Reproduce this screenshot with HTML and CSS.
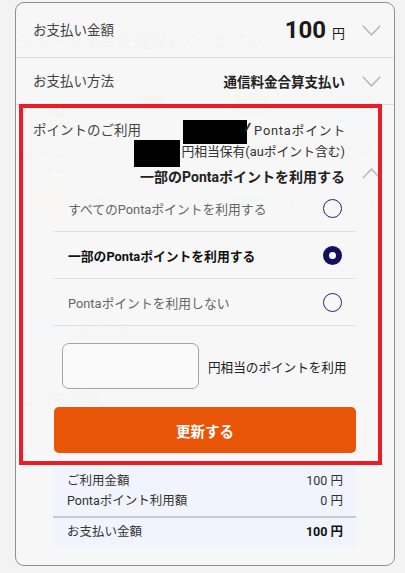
FILE: index.html
```html
<!DOCTYPE html>
<html lang="ja">
<head>
<meta charset="utf-8">
<title>お支払い</title>
<link rel="stylesheet" href="styles.css">
</head>
<body>
<div class="ghost">
  <div class="g-title">チャージ手段を選択してください</div>
  <div class="g-tiles">
    <div class="g-tile"><div class="g-ic g-au">au</div><div class="g-lbl">auかんたん<br>決済</div></div>
    <div class="g-tile"><div class="g-ic g-pay"></div><div class="g-lbl">Pay</div></div>
    <div class="g-tile"><div class="g-ic g-card"></div><div class="g-lbl">クレジット</div></div>
    <div class="g-tile"><div class="g-ic g-bank"></div><div class="g-lbl">銀行口座</div></div>
  </div>
  <div class="g-list">
    <div class="g-item"><span class="g-yen">¥</span><span>払戻金</span></div>
    <div class="g-item"><span class="g-cc"></span><span>クレジットカード</span></div>
  </div>
  <div class="g-list g-list2">
    <div class="g-item"><span class="g-bk"></span><span>銀行口座</span></div>
  </div>
  <div class="g-sub">スマホ決済</div>
</div>

<div class="modal">
  <div class="row row-amount">
    <span class="label">お支払い金額</span>
    <span class="amount"><b>100</b><small>円</small></span>
    <span class="chev"><svg width="19" height="11" viewBox="0 0 19 11"><polyline points="0.8,0.8 9.5,9.8 18.2,0.8" fill="none" stroke="#b9b9b9" stroke-width="1.5"/></svg></span>
  </div>
  <div class="row row-method">
    <span class="label">お支払い方法</span>
    <span class="value">通信料金合算支払い</span>
    <span class="chev"><svg width="19" height="11" viewBox="0 0 19 11"><polyline points="0.8,0.8 9.5,9.8 18.2,0.8" fill="none" stroke="#b9b9b9" stroke-width="1.5"/></svg></span>
  </div>
  <div class="points">
    <div class="points-top">
      <span class="label">ポイントのご利用</span>
      <div class="balance">
        <div class="bal-line"><span class="redact r1"></span><span class="tick"></span><span class="pt">Pontaポイント</span></div>
        <div class="bal-line"><span class="redact r2"></span>円相当保有(auポイント含む)</div>
      </div>
    </div>
    <div class="points-mode">
      <span>一部のPontaポイントを利用する</span>
      <span class="chev"><svg width="19" height="11" viewBox="0 0 19 11"><polyline points="0.8,10.2 9.5,1.2 18.2,10.2" fill="none" stroke="#b9b9b9" stroke-width="1.5"/></svg></span>
    </div>
    <div class="options">
      <div class="opt"><span>すべてのPontaポイントを利用する</span><span class="radio"></span></div>
      <div class="opt on"><span>一部のPontaポイントを利用する</span><span class="radio"></span></div>
      <div class="opt"><span>Pontaポイントを利用しない</span><span class="radio"></span></div>
    </div>
    <div class="custom">
      <div class="input"></div>
      <span>円相当のポイントを利用</span>
    </div>
    <button class="update">更新する</button>
  </div>
  <div class="summary">
    <div class="sum-row"><span>ご利用金額</span><span>100 円</span></div>
    <div class="sum-row"><span>Pontaポイント利用額</span><span>0 円</span></div>
    <div class="sum-sep"></div>
    <div class="sum-row total"><span>お支払い金額</span><b>100 円</b></div>
  </div>
</div>
<div class="annot"></div>
</body>
</html>
```
FILE: styles.css
```css
html, body {
  margin: 0;
  padding: 0;
}
body {
  width: 405px;
  height: 573px;
  overflow: hidden;
  position: relative;
  background: #f3f3f3;
  font-family: Roboto, "Noto Sans CJK JP", sans-serif;
}

/* faint page behind the dialog */
.ghost {
  color: #ebebeb;
}
.g-title {
  padding: 33px 0 0 18px;
  font-size: 16.5px;
  font-weight: 700;
  line-height: 20px;
}
.g-tiles {
  display: grid;
  grid-template-columns: repeat(4, 1fr);
  margin-top: 43px;
  padding: 0 5px;
  text-align: center;
}
.g-tile {
  display: flex;
  flex-direction: column;
  align-items: center;
}
.g-ic {
  width: 32px;
  height: 28px;
  border-radius: 4px;
}
.g-au {
  font-style: italic;
  font-weight: 700;
  font-size: 22px;
  line-height: 28px;
  color: #f4e8e6;
}
.g-pay { background: #f6ecea; width: 20px; height: 16px; }
.g-card { background: #eef2ea; width: 34px; height: 22px; }
.g-bank { background: #eef0f3; width: 30px; height: 26px; }
.g-lbl {
  margin-top: 22px;
  font-size: 12.5px;
  line-height: 16px;
}
.g-list {
  display: grid;
  grid-template-columns: 1fr 1fr;
  margin-top: 7px;
  padding-left: 33px;
}
.g-list2 { margin-top: 94px; }
.g-item {
  display: flex;
  align-items: center;
  gap: 13px;
  font-size: 13px;
  height: 32px;
}
.g-yen {
  width: 32px;
  height: 32px;
  border-radius: 50%;
  background: #f6f3ea;
  color: #f1ecdf;
  text-align: center;
  line-height: 32px;
}
.g-cc { width: 37px; height: 14px; background: #ecf2ec; margin-left: 8px; }
.g-bk { width: 32px; height: 22px; background: #eef0f3; }
.g-sub {
  margin-top: 44px;
  padding-left: 25px;
  font-size: 15px;
  font-weight: 700;
}

/* dialog */
.modal {
  position: absolute;
  left: 15px;
  top: 2px;
  width: 380px;
  height: 564px;
  box-sizing: border-box;
  border: 1px solid #8f8f8f;
  border-radius: 9px;
  background: rgba(250, 250, 250, 0.6);
}
.row {
  display: flex;
  align-items: center;
  padding-left: 17px;
  border-bottom: 1px solid #dcdcdc;
}
.row-amount { height: 54px; }
.row-method { height: 46px; }
.label {
  flex: 1;
  font-size: 13.5px;
  line-height: 21px;
  color: #444;
  white-space: nowrap;
}
.amount {
  display: flex;
  align-items: baseline;
  color: #1a1a1a;
}
.amount b {
  font-size: 24px;
  font-weight: 700;
  line-height: 28px;
}
.amount small {
  font-size: 13px;
  margin-left: 6px;
}
.value {
  font-size: 13.5px;
  font-weight: 700;
  color: #222;
}
.chev {
  width: 49px;
  flex: none;
  display: flex;
  justify-content: flex-end;
  padding-right: 13px;
  box-sizing: border-box;
}
.chev svg { display: block; }

.points { padding-top: 15px; }
.points-top {
  display: flex;
  align-items: flex-start;
  padding-left: 17px;
}
.points-top .label { flex: none; }
.balance {
  flex: 1;
  min-width: 0;
  display: flex;
  flex-direction: column;
  align-items: flex-end;
  padding-right: 49px;
  font-size: 12.8px;
  line-height: 21px;
  color: #333;
}
.bal-line {
  white-space: nowrap;
}
.redact {
  display: inline-block;
  background: #000;
  vertical-align: middle;
}
.r1 { width: 64px; height: 24px; margin: -3px 0; }
.r2 { width: 46px; height: 27px; margin: -4px 1px -5px 0; }
.tick {
  display: inline-block;
  width: 1.5px;
  height: 8px;
  background: #333;
  transform: skewX(-28deg);
  vertical-align: 4px;
}
.pt {
  margin-left: 6px;
  letter-spacing: 0.8px;
  margin-right: -1px;
}
.points-mode {
  display: flex;
  justify-content: flex-end;
  align-items: center;
  height: 18px;
  margin-top: 5px;
  font-size: 14px;
  font-weight: 700;
  color: #222;
}
.points-mode .chev { margin-top: -5px; }

.options { margin: 0 38px 0 37px; }
.opt {
  height: 46px;
  border-bottom: 1px solid #e0e0e0;
  display: flex;
  align-items: center;
  justify-content: space-between;
  padding: 0 14px 0 15px;
  font-size: 12.8px;
  color: #666;
}
.opt.on {
  color: #111;
  font-weight: 700;
}
.radio {
  width: 19px;
  height: 19px;
  box-sizing: border-box;
  border: 1.4px solid #25246f;
  border-radius: 50%;
}
.opt.on .radio {
  border: 6px solid #12125c;
  background: #fff;
}

.custom {
  display: flex;
  align-items: center;
  gap: 9px;
  margin: 17px 38px 0 46px;
}
.input {
  width: 137px;
  height: 46px;
  box-sizing: border-box;
  border: 1px solid #a5a5a5;
  border-radius: 7px;
  background: #fafafa;
}
.custom span {
  font-size: 12.6px;
  color: #222;
}
.update {
  display: block;
  margin: 18px 0 0 38px;
  width: 302px;
  height: 46px;
  border: none;
  border-radius: 5px;
  background: #e95506;
  color: #fff;
  font-family: inherit;
  font-size: 14.5px;
  font-weight: 700;
}

.summary {
  margin: 14px 38px 0 37px;
  background: #f1f4fc;
  padding: 4px 13px 5px 14px;
  font-size: 12.5px;
  color: #333;
}
.sum-row {
  display: flex;
  justify-content: space-between;
  line-height: 20px;
}
.sum-row.total b {
  font-weight: 700;
  color: #111;
}
.sum-sep {
  height: 2px;
  background: #c9cad0;
  margin: 5px -13px 4px -14px;
}

.annot {
  position: absolute;
  left: 19px;
  top: 104px;
  width: 363px;
  height: 361px;
  box-sizing: border-box;
  border: 4px solid #ed1c24;
}
```
